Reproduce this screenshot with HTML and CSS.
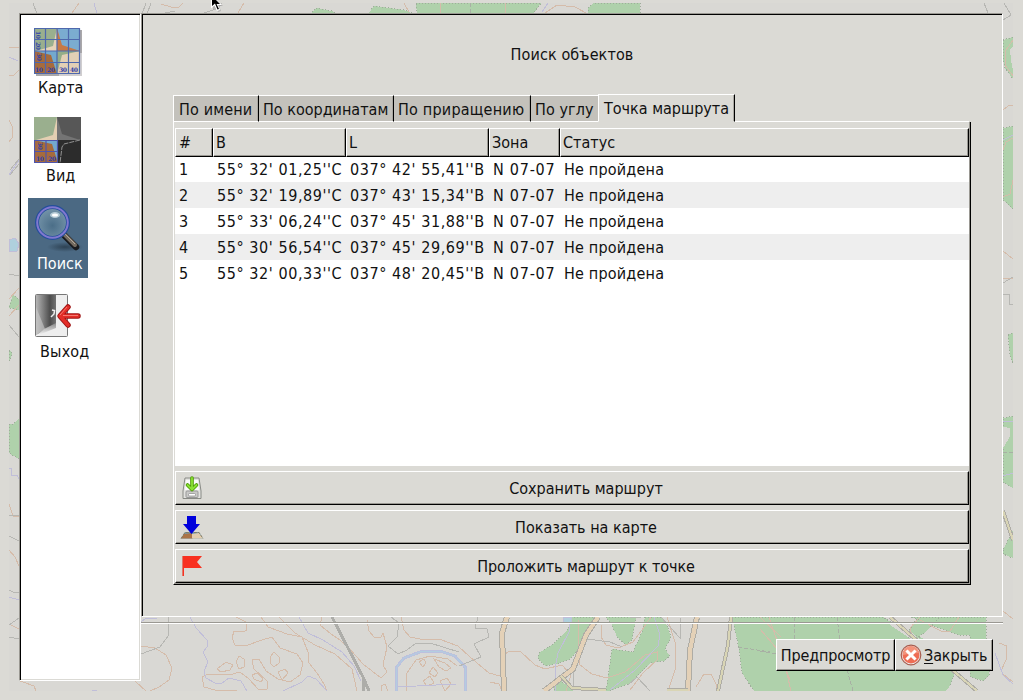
FILE: index.html
```html
<!DOCTYPE html>
<html lang="ru">
<head>
<meta charset="utf-8">
<title>Поиск объектов</title>
<link rel="stylesheet" href="styles.css">
</head>
<body>
<svg class="map" width="1023" height="700" viewBox="0 0 1023 700" aria-hidden="true">
  <defs><clipPath id="mapArea"><rect x="9" y="3" width="1004" height="688"/></clipPath></defs>
  <g clip-path="url(#mapArea)">
    <rect class="land" x="9" y="3" width="1004" height="688"/>
    <g class="wood">
      <path d="M310 14L316 8L332 11L336 14zM368 14L374 6L404 10L414 14zM416 3H541L533 14H417zM588 14V8L594 3H640V14z"/>
      <path d="M1003 40L1013 37V79L1005 68L1003 60zM1003 128L1013 126V209L1003 200zM1008 335L1013 333V363L1010 355zM1003 418L1013 416V488L1003 482zM1003 550V554L1013 558V530z"/>
      <path d="M9 307L13 295L19 299V310L9 308zM9 350L12 353L10 360H9zM9 424H13L19 418V459L9 453z"/>
      <path d="M571 617H598L579 647L577 651L569 660L556 664L545 666L538 659L539 653L552 645L568 629zM606 617H636L632 640L626 645L617 637L612 625zM645 617H662L668 628L671 637L665 649L670 656L664 661L650 663L630 683L610 691H606L612 649L633 652L642 632zM560 680L574 691H554V683z"/>
      <path d="M732 617H883L901 629L931 642L956 652L960 660L948 691H754L742 673L739 648zM911 617H986V640L989 650V675L984 681L970 677V635H958L947 631zM906 635L918 617L940 617L923 634L912 640z"/>
    </g>
    <g class="clearing"><path d="M894 617L918 638L958 672L984 691H946L960 673L950 665L890 625z"/><path d="M1003 427L1010 428V436L1004 447H1003zM1010 50L1013 46V70L1011 60z"/></g>
    <g class="contour">
      <path d="M72 13L79 3M161 4L171 7H179L183 3M238 13L244 3M9 47H19M19 70L14 75L9 76M9 120L12 126V138L9 142M19 288L9 299M19 305L9 316M9 504L13 516H19M9 550L15 557L19 566M9 624L19 629M440 3V14M505 3V14M404 3L409 12M545 13L557 5L575 7L588 14M1003 110L1008 106L1013 105M1013 40L1006 50L1005 65L1013 76M1003 150L1006 142L1013 138M1013 180L1010 194L1003 197M1003 251L1013 259M1003 278H1013M1003 611L1013 619"/>
      <path d="M20 681L34 686L36 691M141 646L155 648L166 655L172 668L169 680L159 687L150 691M135 681L146 691M236 617L246 622L247 630L243 632L234 631L232 638L235 645L245 646L262 640L272 637L280 648L297 654L303 663L300 675L290 682L278 679L266 671L259 659L252 660L254 669L267 681V689L259 690L248 678L240 672L229 675L208 674L202 677L204 687L215 690H237M261 617L268 627L287 634L302 637L308 652L309 663L317 673L324 684L327 691M279 617L295 633L315 645L335 654L352 669L357 691M322 617L320 625L331 634L340 640L349 648L363 664L381 678L387 672L383 665L387 647L383 633L381 637L374 637L369 631L367 620M401 617L404 630L410 637L425 640L439 639L458 646L470 657L489 673L500 676"/>
      <path d="M217 669L226 662L233 665L230 670L221 672zM236 662L239 656L244 659V667L239 669zM270 657L274 652L279 657V663L274 667L270 663zM278 672L285 669L288 673L282 680zM252 675L257 673L263 679L261 682L254 679zM419 662L424 659L426 663L423 667zM434 659L445 663L451 668L446 671L439 667zM429 673L433 667L438 673L435 677zM423 681L430 676L434 683L427 686zM440 681L447 678L451 684L445 691zM406 691L407 673L416 660L430 656L448 659L457 666M381 691V686L385 684L388 691"/>
      <path d="M505 654L510 651H520L535 665L545 669L562 665L571 675L566 691M490 682L499 684L502 691M579 620L578 641L580 665L592 674L607 678L625 672L645 655L657 652V660L643 673L630 690M601 625V637L606 645L618 648L633 642L642 630L651 617M667 617L675 642V670L668 691M696 687L704 674L711 674L716 684V691M760 629L778 650L790 680M769 617L784 661L791 691M760 617L781 637M920 617L910 628L912 635M920 620L941 631H950L959 617M999 643L1007 646L1006 660L1001 671M1003 674L1013 682"/>
    </g>
    <g class="water">
      <path d="M94 3L97 14M9 57L18 61M19 160L9 175M9 468H11V475H17L19 479M9 597L19 600M141 622L146 618H157M190 617L196 628L207 640V647L203 652L208 662L204 671L206 678L215 683H222L229 678L241 681L247 691M299 617L308 633L323 640L342 652L354 666L361 681M283 691L302 682L308 676L316 679L327 691M542 12L548 3M570 617L569 632L558 653L555 668V691M654 617L660 635L658 646L635 670L610 690M1003 140L1013 135M1003 421H1013M1003 476L1013 473M995 653L1003 675L1013 684M92 690H97M397 687L456 684"/>
      <path class="lake" d="M9 240L15 238L19 244L17 251H9z"/><path class="lake" d="M563 617H571V622H563z"/>
    </g>
    <path class="river" d="M396 691V668L404 658L420 652L440 651L455 656L465 667V691"/>
    <path class="river inner" d="M396 691V668L404 658L420 652L440 651L455 656L465 667V691"/>
    <g class="road">
      <path d="M146 3L142 14M151 3L147 14M33 3L37 14M10 170L19 159M10 175L19 164M9 274L19 276M9 325L19 337M9 536L19 541M9 515H19M9 590L13 592H19M9 625L19 618M9 637L19 639M165 13L175 11M204 13L213 10L218 8L222 3M984 3L988 13M1003 20L1011 15L1004 3M1003 283L1013 277M1003 294H1009V304H1013M141 654L160 647L168 636V617M391 617L399 623L397 637L388 646L398 654L407 650L416 643L430 643L459 652M478 617L475 628L487 629L489 637L474 644L481 657L459 666M587 639L610 642L622 647M574 665L573 687M661 617L680 638V618M628 685L637 677L650 691M630 617H641"/>
      <path class="dashed" d="M470 3V14M794 617V640M837 617L841 648L853 691M738 647L770 652M1003 452H1013M760 651L776 654"/>
    </g>
    <path class="track" d="M332 617L363 677L369 691M363 677V691"/>
    <g class="highway">
      <path class="edge" d="M507 617L502 633L504 691M598 617L586 635L573 669L544 691M697 617L690 650L688 691"/>
      <path class="fill" d="M507 617L502 633L504 691M598 617L586 635L573 669L544 691M697 617L690 650L688 691"/>
      <path class="edge small" d="M731 617L728 645L718 691M890 617L914 638L956 673L977 691M1003 511L1013 540M561 676L572 688L606 690M667 690H688"/>
      <path class="fill small" d="M731 617L728 645L718 691M890 617L914 638L956 673L977 691M1003 511L1013 540M561 676L572 688L606 690M667 690H688"/>
    </g>
  </g>
</svg>

<main class="dialog">
  <div class="upper">
    <nav class="sidebar">
      <a class="item map-item">
        <svg width="50" height="49" viewBox="0 0 50 49">
          <path d="M2 3H48V49H2z" fill="#aaa8aa"/><path d="M25 26H48V49H25z" fill="#d0ced0"/>
          <path d="M0 1H23V24H0z" fill="#9aaf8e"/><path d="M23 1H46V24H23z" fill="#7bacd0"/><path d="M0 24H23V47H0z" fill="#a66b3d"/><path d="M23 24H46V47H23z" fill="#e3d0b5"/>
          <path d="M23 1V24H2L19 19z" fill="#e8d3b8"/><path d="M23 1L28 18L46 24H23z" fill="#c77944"/><path d="M0 24H23V47L17 28z" fill="#73a9ce"/><path d="M23 24H46L28 28L23 47z" fill="#94ad88"/>
          <path d="M.5 1.500H45.500V46.500H.5zM11.500 1V47M23 1V47M34.500 1V47M0 12.500H46M0 24H46M0 35.500H46" fill="none" stroke="#4e68ad" stroke-width="1.200"/>
          <g class="ticks"><text x="1" y="45">10</text><text x="13" y="45">20</text><text x="25" y="45">30</text><text x="36" y="45">40</text><text transform="translate(2 4) rotate(90)">10</text><text transform="translate(2 15) rotate(90)">20</text><text transform="translate(3 26) rotate(90)">30</text></g>
        </svg>
        <span>Карта</span>
      </a>
      <a class="item view-item">
        <svg width="50" height="49" viewBox="0 0 50 49">
          <path d="M0 1H23V24H0z" fill="#9aaf8e"/><path d="M23 1H47V24H23z" fill="#575757"/><path d="M0 24H24V47H0z" fill="#a66b3d"/><path d="M24 24H47V47H24z" fill="#2c2c2c"/>
          <path d="M23 1V24H2L19 19z" fill="#e3cfb2"/><path d="M23 1L28 18L46 24H23z" fill="#747474"/><path d="M0 24H24V47L18 28z" fill="#73a9ce"/><path d="M46 24L30 28L28 31L26 47" fill="none" stroke="#929292" stroke-dasharray="5 1"/>
          <path d="M.5 24.500H23.500V46.500H.5zM12 24V47M0 35.500H24" fill="none" stroke="#4e55ad" stroke-width="1.200"/>
          <g class="ticks"><text x="2" y="45">10</text><text x="14" y="45">20</text><text transform="translate(4 26) rotate(90)">30</text></g>
        </svg>
        <span>Вид</span>
      </a>
      <a class="item search-item selected">
        <svg width="50" height="49" viewBox="0 0 50 49">
          <defs><radialGradient id="glass" cx=".5" cy=".6"><stop offset="0" stop-color="#4b6e88"/><stop offset="1" stop-color="#7090a6"/></radialGradient><radialGradient id="shade"><stop offset="0" stop-color="#1d2c39" stop-opacity=".65"/><stop offset="1" stop-color="#1d2c39" stop-opacity="0"/></radialGradient></defs>
          <ellipse cx="31" cy="43" rx="18" ry="5" fill="url(#shade)"/>
          <path d="M31 32L42 43" stroke="#191b1e" stroke-width="6.500" stroke-linecap="round"/><path d="M31 31L41 41" stroke="#746b60" stroke-width="4" stroke-linecap="round"/><path d="M31 30L41 40" stroke="#b1a799" stroke-width="1"/>
          <circle cx="18.500" cy="18.500" r="15.500" fill="url(#glass)" stroke="#244e9c" stroke-width="4"/><circle cx="18.500" cy="18.500" r="15.300" fill="none" stroke="#8078cf" stroke-width="2"/>
          <ellipse cx="21" cy="11" rx="5" ry="3" fill="#d9e8ee" opacity=".7"/><ellipse cx="21" cy="11" rx="3" ry="1.600" fill="#fff"/>
        </svg>
        <span>Поиск</span>
      </a>
      <a class="item exit-item">
        <svg width="50" height="49" viewBox="0 0 50 49">
          <defs><linearGradient id="door"><stop offset="0" stop-color="#b5b5b5"/><stop offset=".7" stop-color="#4d4d4d"/><stop offset="1" stop-color="#727272"/></linearGradient><linearGradient id="floor" x2="0" y2="1"><stop offset="0" stop-color="#888"/><stop offset="1" stop-color="#fff"/></linearGradient></defs>
          <rect x="1.500" y="2.500" width="32" height="42" rx="1" fill="#eee" stroke="#777"/>
          <path d="M2 3H22V34L2 43z" fill="url(#door)"/><path d="M2 44L10 37L22 31V36z" fill="url(#floor)"/><path d="M2 43V15L11 37z" fill="#ccc" opacity=".6"/><path d="M18 18L20.500 18.500L20 22L17 25" fill="none" stroke="#eee" stroke-width="1.500"/>
          <path d="M34 15L26 24L34 33M27 24H44" fill="none" stroke="#9e1515" stroke-width="5.500" stroke-linecap="round" stroke-linejoin="round"/><path d="M34 15L26 24L34 33M27 24H44" fill="none" stroke="#e32e28" stroke-width="3.500" stroke-linecap="round" stroke-linejoin="round"/><path d="M33 15L26 23M29 23.500H44" stroke="#f77a70" stroke-width="1"/>
        </svg>
        <span>Выход</span>
      </a>
    </nav>

    <div class="right">
      <section class="page">
        <h1>Поиск объектов</h1>
        <div class="tabs">
          <div class="tab t1">По имени</div><div class="tab t2">По координатам</div><div class="tab t3">По приращению</div><div class="tab t4">По углу</div><div class="tab active">Точка маршрута</div>
        </div>
        <div class="notebook">
          <div class="list">
            <div class="row head"><span>#</span><span>B</span><span>L</span><span>Зона</span><span>Статус</span></div>
            <div class="row"><span>1</span><span class="coord">55° 32' 01,25''С</span><span class="coord">037° 42' 55,41''В</span><span class="zone">N 07-07</span><span class="status">Не пройдена</span></div>
            <div class="row"><span>2</span><span class="coord">55° 32' 19,89''С</span><span class="coord">037° 43' 15,34''В</span><span class="zone">N 07-07</span><span class="status">Не пройдена</span></div>
            <div class="row"><span>3</span><span class="coord">55° 33' 06,24''С</span><span class="coord">037° 45' 31,88''В</span><span class="zone">N 07-07</span><span class="status">Не пройдена</span></div>
            <div class="row"><span>4</span><span class="coord">55° 30' 56,54''С</span><span class="coord">037° 45' 29,69''В</span><span class="zone">N 07-07</span><span class="status">Не пройдена</span></div>
            <div class="row"><span>5</span><span class="coord">55° 32' 00,33''С</span><span class="coord">037° 48' 20,45''В</span><span class="zone">N 07-07</span><span class="status">Не пройдена</span></div>
          </div>
          <button class="btn wide">
            <svg width="24" height="24" viewBox="0 0 24 24"><path d="M5 2H19L21 15V22.500H3V15z" fill="#e2e2df" stroke="#888a85"/><path d="M6 4H18L19 14H5z" fill="#fafafa"/><rect x="6" y="15" width="12" height="6.500" rx="1" fill="#c9c9c7" stroke="#999"/><rect x="8.500" y="17.500" width="7" height="2.500" rx="1" fill="#fff" stroke="#888" stroke-width=".7"/><path d="M12 2V12M7.500 9L12 13.500L16.500 9" fill="none" stroke="#4e9a06" stroke-width="3.600" stroke-linecap="round" stroke-linejoin="round"/><path d="M12 2V12M7.500 9L12 13.500L16.500 9" fill="none" stroke="#8ae234" stroke-width="1.800" stroke-linecap="round" stroke-linejoin="round"/></svg>
            <span>Сохранить маршрут</span>
          </button>
          <button class="btn wide">
            <svg width="24" height="24" viewBox="0 0 24 24"><path d="M5 17H19L23 23.500H1z" fill="#759eb2"/><path d="M4 19L12 18L13 23.500H1z" fill="#ab7448"/><path d="M12 19L19 18L23 23.500H12z" fill="#e3cdae"/><path d="M1 23.500L5 17.500H19L23 23.500" fill="none" stroke="#857d65" stroke-dasharray="3 1"/><path d="M7 1H16V9H20L11.500 19L3 9H7z" fill="#0000dc"/></svg>
            <span>Показать на карте</span>
          </button>
          <button class="btn wide">
            <svg width="24" height="24" viewBox="0 0 24 24"><path d="M2 2H22L17 8L22 14H4V22H2z" fill="#f83020"/><path d="M2.500 2V22" stroke="#e0796a"/></svg>
            <span>Проложить маршрут к точке</span>
          </button>
        </div>
      </section>
      <div class="rule"></div>
      <footer class="actions">
        <button class="btn preview">Предпросмотр</button>
        <button class="btn close">
          <svg width="22" height="22" viewBox="0 0 22 22"><circle cx="11" cy="11" r="9.800" fill="#eee" stroke="#a85d4e" stroke-width="1.200"/><circle cx="11" cy="11" r="8.500" fill="#ee6d55"/><path d="M3 11A8 8 0 0 1 19 9Q12 9 3 11z" fill="#f3937b"/><path d="M7.500 7.500L14.500 14.500M14.500 7.500L7.500 14.500" stroke="#fff" stroke-width="3" stroke-linecap="square"/></svg>
          <span><u>З</u>акрыть</span>
        </button>
      </footer>
    </div>
  </div>
</main>
<svg class="cursor" width="16" height="14" viewBox="0 0 16 14" aria-hidden="true"><path d="M3 1V10L6 8L8 12L11 11L9 6H13L7 0" fill="#999" opacity=".6"/><path d="M1 0V8.500L4.500 5.500L7 11L10 10L8 5H12L7 0z" fill="#fff"/><path d="M2 0V6L5 3.500L7.500 9.500L9 9L6.500 4H10L6 0z" fill="#000"/></svg>
</body>
</html>
```
FILE: styles.css
```css
* { box-sizing: border-box; }
body {
  margin: 0;
  width: 1023px;
  height: 700px;
  overflow: hidden;
  background: #dbdad5;
  color: #111;
  font: 16px/20px "DejaVu Sans Condensed", "DejaVu Sans", sans-serif;
}
.map { position: absolute; left: 0; top: 0; shape-rendering: crispEdges; }
.land, .clearing { fill: #d9d8d4; }
.wood { fill: #afd1ab; stroke: #9fad9b; stroke-dasharray: 1 2; }
.contour { fill: none; stroke: #d5bcaa; }
.water { fill: none; stroke: #c0bed9; }
.lake { fill: #afd0dd; }
.river { fill: none; stroke: #bcc0de; stroke-width: 3; }
.river.inner { stroke: #b3cde0; stroke-width: 1; }
.road { fill: none; stroke: #b7b7b3; }
.dashed { stroke: #a8b0a4; stroke-dasharray: 4 2; }
.track { fill: none; stroke: #adada9; stroke-width: 3; }
.highway { fill: none; }
.edge { stroke: #aeaca5; stroke-width: 6; }
.fill { stroke: #e4d1b7; stroke-width: 4; }
.edge.small { stroke-width: 4; }
.fill.small { stroke: #d9d5b5; stroke-width: 2; }
.cursor { position: absolute; left: 210px; top: 0; }

.dialog { position: relative; padding: 13px 20px 0 19px; }
.upper { display: flex; align-items: flex-start; }
.sidebar {
  width: 122px;
  height: 668px;
  padding: 8px 0 0 8px;
  background: #fff;
  border: 1px solid #fff;
  border-top-color: #9a9892;
  border-left-color: #9a9892;
  box-shadow: inset 1px 1px #000, inset -1px -1px #dbdad5;
}
.item { display: block; width: 60px; height: 80px; margin-bottom: 8px; padding-top: 6px; }
.item svg { display: block; margin-left: 6px; }
.item span { display: block; margin-top: 1px; white-space: nowrap; }
.map-item { padding-top: 5px; }
.map-item span { margin-top: 2px; padding-left: 10px; }
.view-item span { padding-left: 18px; }
.search-item span { padding-left: 9px; }
.exit-item span { padding-left: 12px; letter-spacing: .2px; }
.selected { background: #4b6983; color: #fff; }
.ticks text { font: bold 6px "DejaVu Serif", serif; letter-spacing: -.4px; fill: #303dab; }

.right { width: 862px; }
.page {
  height: 604px;
  padding: 29px 31px 0;
  background: #dbdad5;
  border: 1px solid #fff;
  border-top-color: #9a9892;
  border-left-color: #9a9892;
  box-shadow: inset 1px 1px #000;
}
h1 { margin: 2px 0 29px; font: inherit; letter-spacing: .12px; text-align: center; line-height: 20px; }
.tabs { display: flex; align-items: flex-end; height: 28px; }
.tabs::after { content: ""; flex: 1; margin-right: 2px; border-bottom: 1px solid #fff; }
.tab {
  height: 27px;
  padding: 4px 0 0 4px;
  background: #c3c1bb;
  border-top: 1px solid #fff;
  border-right: 1px solid #000;
  border-bottom: 1px solid #fff;
  box-shadow: inset -1px 0 #aaa8a2;
  white-space: nowrap;
}
.t1 { width: 86px; padding-left: 5px; border-left: 1px solid #fff; letter-spacing: .15px; }
.t2 { width: 135px; }
.t3 { width: 137px; letter-spacing: .22px; }
.t4 { width: 67px; border-right: 0; box-shadow: none; letter-spacing: .1px; }
.tab.active {
  width: 137px;
  height: 28px;
  padding-left: 5px;
  background: #dbdad5;
  border-left: 1px solid #fff;
  border-bottom-color: #dbdad5;
}
.notebook {
  height: 463px;
  width: 798px;
  padding: 6px 1px 0;
  border: solid;
  border-width: 0 1px 1px;
  border-color: #fff #000 #000 #fff;
  box-shadow: inset -1px -1px #9a9892;
}
.list { width: 794px; height: 338px; margin-bottom: 5px; background: #fff; }
.row {
  display: grid;
  grid-template-columns: 38px 133px 143px 71px 1fr;
  height: 26px;
  line-height: 27px;
  white-space: nowrap;
}
.row:nth-child(odd):not(.head) { background: #eee; }
.row > span { padding-left: 4px; }
.coord { letter-spacing: .57px; }
.zone { letter-spacing: .75px; }
.status { letter-spacing: .2px; }
.head { height: 28px; }
.row.head > span {
  padding-left: 2px;
  line-height: 27px;
  background: #dbdad5;
  border: 1px solid;
  border-color: #fff #000 #000 #fff;
  box-shadow: inset -1px -1px #9a9892;
}
.row.head > span:first-child { padding-left: 3px; }
.btn {
  margin: 0;
  padding: 0;
  background: #dbdad5;
  border: 1px solid #fff;
  border-right-color: #000;
  border-bottom-color: #000;
  box-shadow: inset -1px -1px #9a9892;
  color: inherit;
  font: inherit;
  white-space: nowrap;
}
.wide { display: flex; align-items: center; width: 794px; height: 34px; margin-bottom: 5px; padding-left: 4px; }
.wide span { flex: 1; padding-top: 2px; text-align: center; }
.wide:nth-child(4) span { letter-spacing: -.08px; }
.rule { height: 2px; margin-top: 5px; background: linear-gradient(#9a9892 50%, #fff 50%); }
.actions { display: flex; justify-content: flex-end; margin-top: 15px; padding-right: 10px; }
.actions .btn { height: 32px; }
.actions .preview { width: 119px; padding-top: 2px; letter-spacing: -.15px; }
.close { display: flex; align-items: center; width: 98px; padding-left: 4px; }
.close span { margin-left: 2px; padding-top: 2px; letter-spacing: -.1px; }
u { text-underline-offset: 2px; text-decoration-thickness: 1px; }
```
